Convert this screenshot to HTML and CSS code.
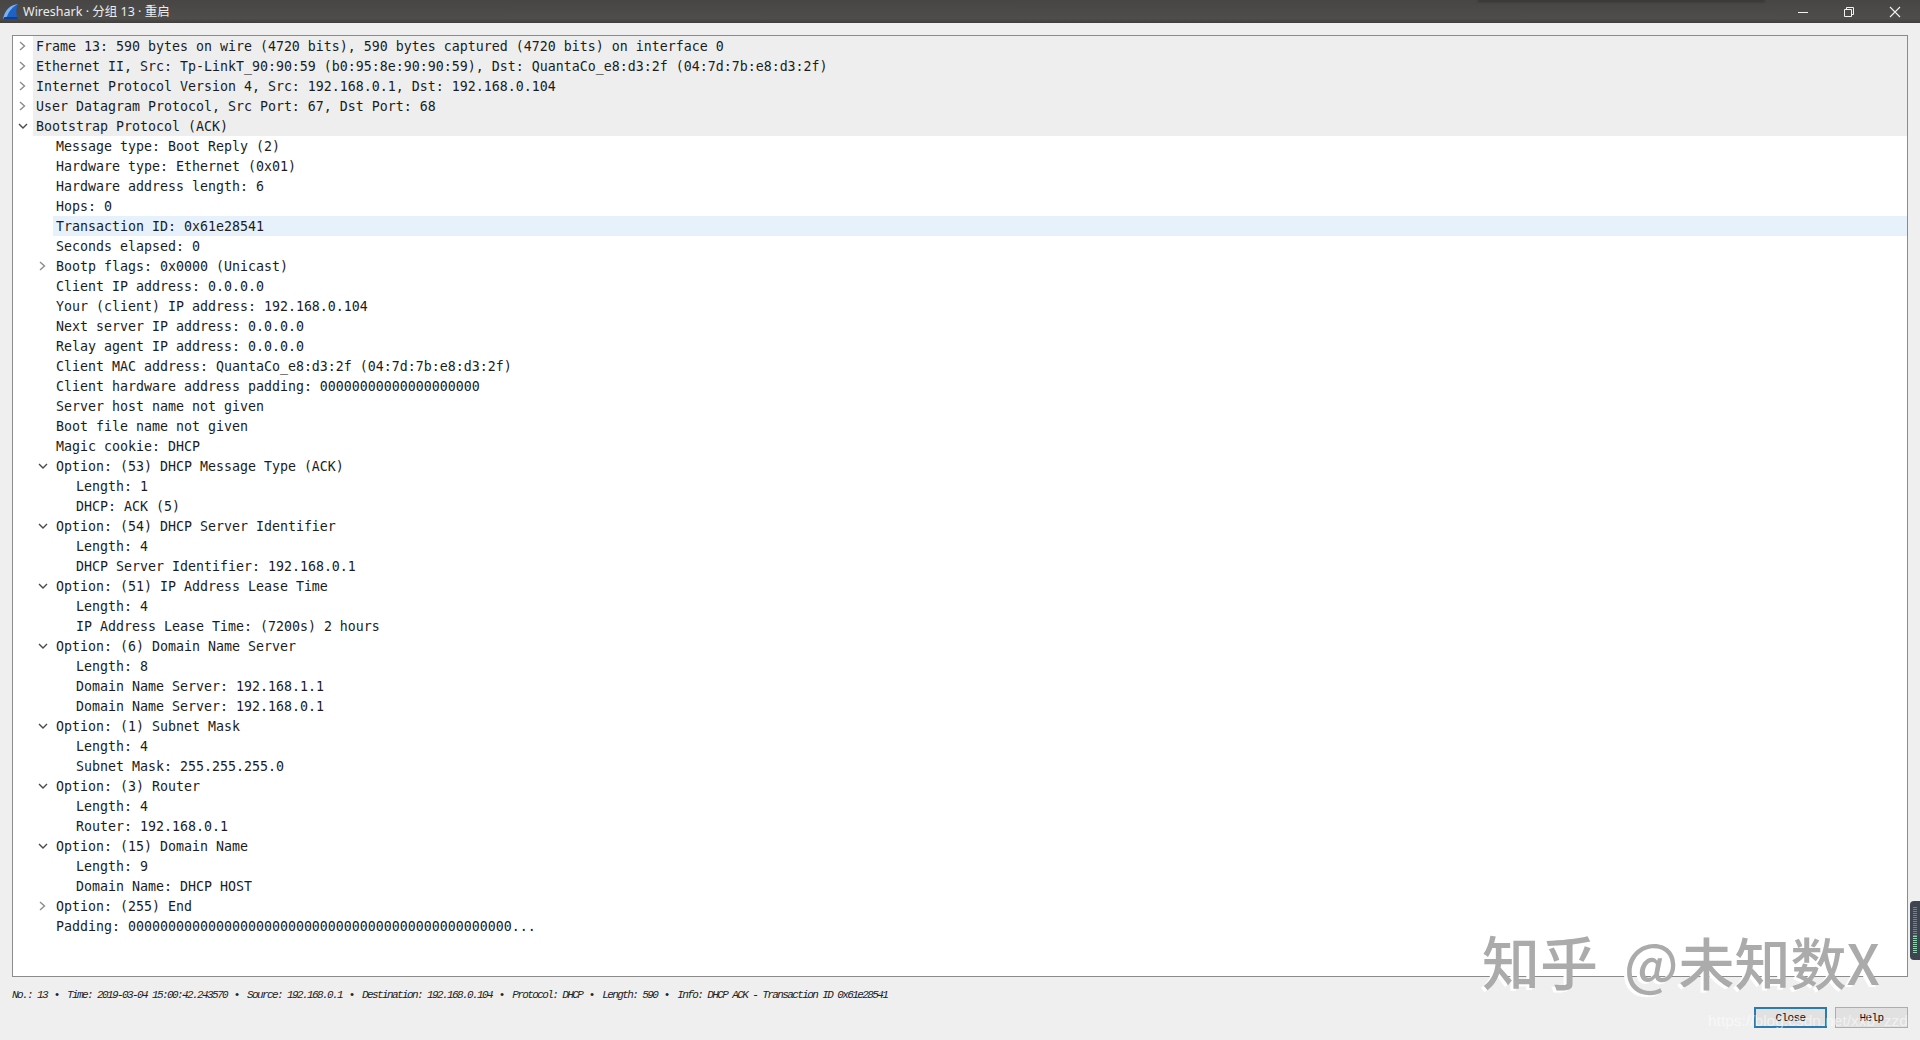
FILE: index.html
```html
<!DOCTYPE html>
<html lang="zh-CN">
<head>
<meta charset="utf-8">
<title>Wireshark · 分组 13 · 重启</title>
<link rel="stylesheet" href="styles.css">
</head>
<body>
<svg class="defs" width="0" height="0" aria-hidden="true">
  <symbol id="closed" viewBox="0 0 20 20"><path d="M7 6l4.500 4-4.500 4" fill="none" stroke="#8c8c8c" stroke-width="1.400"/></symbol>
  <symbol id="open" viewBox="0 0 20 20"><path d="M6 8l4 4 4-4" fill="none" stroke="#4a4a4a" stroke-width="1.400"/></symbol>
</svg>
<div class="window">
  <header class="titlebar">
    <svg class="app-icon" width="17" height="19" viewBox="0 0 17 19">
      <path d="M1 17.500C2 10 7 3 16 2c-2.500 5-2 11 0 15.500z" fill="#1f62c4"/>
      <path d="M1 17.500C2 10 7 3 16 2 11 4.500 7 9 5 14.500z" fill="#7fb2ea"/>
      <path d="M1 17.500h15l-.7-2.500H2.500z" fill="#113f96"/>
    </svg>
    <span class="title">Wireshark · 分组 13 · 重启</span>
    <div class="controls">
      <button class="ctl"><svg width="12" height="12" viewBox="0 0 12 12"><path d="M1 6.500h10" stroke="#f2f2f2" stroke-width="1"/></svg></button>
      <button class="ctl"><svg width="12" height="12" viewBox="0 0 12 12"><path d="M1.500 3.500h7v7h-7zM3.500 3.500v-2h7v7h-2" fill="none" stroke="#f2f2f2" stroke-width="1"/></svg></button>
      <button class="ctl"><svg width="12" height="12" viewBox="0 0 12 12"><path d="M1 1l10 10M11 1L1 11" stroke="#f2f2f2" stroke-width="1.100"/></svg></button>
    </div>
  </header>

  <main class="tree">
    <div class="row top"><svg class="arrow"><use href="#closed"/></svg><span class="label">Frame 13: 590 bytes on wire (4720 bits), 590 bytes captured (4720 bits) on interface 0</span></div>
    <div class="row top"><svg class="arrow"><use href="#closed"/></svg><span class="label">Ethernet II, Src: Tp-LinkT_90:90:59 (b0:95:8e:90:90:59), Dst: QuantaCo_e8:d3:2f (04:7d:7b:e8:d3:2f)</span></div>
    <div class="row top"><svg class="arrow"><use href="#closed"/></svg><span class="label">Internet Protocol Version 4, Src: 192.168.0.1, Dst: 192.168.0.104</span></div>
    <div class="row top"><svg class="arrow"><use href="#closed"/></svg><span class="label">User Datagram Protocol, Src Port: 67, Dst Port: 68</span></div>
    <div class="row top"><svg class="arrow"><use href="#open"/></svg><span class="label">Bootstrap Protocol (ACK)</span></div>
    <div class="row d1"><span class="arrow"></span><span class="label">Message type: Boot Reply (2)</span></div>
    <div class="row d1"><span class="arrow"></span><span class="label">Hardware type: Ethernet (0x01)</span></div>
    <div class="row d1"><span class="arrow"></span><span class="label">Hardware address length: 6</span></div>
    <div class="row d1"><span class="arrow"></span><span class="label">Hops: 0</span></div>
    <div class="row d1 selected"><span class="arrow"></span><span class="label">Transaction ID: 0x61e28541</span></div>
    <div class="row d1"><span class="arrow"></span><span class="label">Seconds elapsed: 0</span></div>
    <div class="row d1"><svg class="arrow"><use href="#closed"/></svg><span class="label">Bootp flags: 0x0000 (Unicast)</span></div>
    <div class="row d1"><span class="arrow"></span><span class="label">Client IP address: 0.0.0.0</span></div>
    <div class="row d1"><span class="arrow"></span><span class="label">Your (client) IP address: 192.168.0.104</span></div>
    <div class="row d1"><span class="arrow"></span><span class="label">Next server IP address: 0.0.0.0</span></div>
    <div class="row d1"><span class="arrow"></span><span class="label">Relay agent IP address: 0.0.0.0</span></div>
    <div class="row d1"><span class="arrow"></span><span class="label">Client MAC address: QuantaCo_e8:d3:2f (04:7d:7b:e8:d3:2f)</span></div>
    <div class="row d1"><span class="arrow"></span><span class="label">Client hardware address padding: 00000000000000000000</span></div>
    <div class="row d1"><span class="arrow"></span><span class="label">Server host name not given</span></div>
    <div class="row d1"><span class="arrow"></span><span class="label">Boot file name not given</span></div>
    <div class="row d1"><span class="arrow"></span><span class="label">Magic cookie: DHCP</span></div>
    <div class="row d1"><svg class="arrow"><use href="#open"/></svg><span class="label">Option: (53) DHCP Message Type (ACK)</span></div>
    <div class="row d2"><span class="arrow"></span><span class="label">Length: 1</span></div>
    <div class="row d2"><span class="arrow"></span><span class="label">DHCP: ACK (5)</span></div>
    <div class="row d1"><svg class="arrow"><use href="#open"/></svg><span class="label">Option: (54) DHCP Server Identifier</span></div>
    <div class="row d2"><span class="arrow"></span><span class="label">Length: 4</span></div>
    <div class="row d2"><span class="arrow"></span><span class="label">DHCP Server Identifier: 192.168.0.1</span></div>
    <div class="row d1"><svg class="arrow"><use href="#open"/></svg><span class="label">Option: (51) IP Address Lease Time</span></div>
    <div class="row d2"><span class="arrow"></span><span class="label">Length: 4</span></div>
    <div class="row d2"><span class="arrow"></span><span class="label">IP Address Lease Time: (7200s) 2 hours</span></div>
    <div class="row d1"><svg class="arrow"><use href="#open"/></svg><span class="label">Option: (6) Domain Name Server</span></div>
    <div class="row d2"><span class="arrow"></span><span class="label">Length: 8</span></div>
    <div class="row d2"><span class="arrow"></span><span class="label">Domain Name Server: 192.168.1.1</span></div>
    <div class="row d2"><span class="arrow"></span><span class="label">Domain Name Server: 192.168.0.1</span></div>
    <div class="row d1"><svg class="arrow"><use href="#open"/></svg><span class="label">Option: (1) Subnet Mask</span></div>
    <div class="row d2"><span class="arrow"></span><span class="label">Length: 4</span></div>
    <div class="row d2"><span class="arrow"></span><span class="label">Subnet Mask: 255.255.255.0</span></div>
    <div class="row d1"><svg class="arrow"><use href="#open"/></svg><span class="label">Option: (3) Router</span></div>
    <div class="row d2"><span class="arrow"></span><span class="label">Length: 4</span></div>
    <div class="row d2"><span class="arrow"></span><span class="label">Router: 192.168.0.1</span></div>
    <div class="row d1"><svg class="arrow"><use href="#open"/></svg><span class="label">Option: (15) Domain Name</span></div>
    <div class="row d2"><span class="arrow"></span><span class="label">Length: 9</span></div>
    <div class="row d2"><span class="arrow"></span><span class="label">Domain Name: DHCP HOST</span></div>
    <div class="row d1"><svg class="arrow"><use href="#closed"/></svg><span class="label">Option: (255) End</span></div>
    <div class="row d1"><span class="arrow"></span><span class="label">Padding: 000000000000000000000000000000000000000000000000...</span></div>
  </main>

  <footer class="bottom">
    <p class="summary">No.: 13 <i class="dot">•</i> Time: 2019-03-04 15:00:42.243570 <i class="dot">•</i> Source: 192.168.0.1 <i class="dot">•</i> Destination: 192.168.0.104 <i class="dot">•</i> Protocol: DHCP <i class="dot">•</i> Length: 590 <i class="dot">•</i> Info: DHCP ACK - Transaction ID 0x61e28541</p>
    <div class="buttons">
      <button class="btn primary">Close</button>
      <button class="btn">Help</button>
    </div>
  </footer>
</div>

<div class="mark-zhihu"><span>知乎</span><span class="handle">@未知数X</span></div>
<div class="mark-csdn">https://blog.csdn.net/xxb_zzd</div>
<div class="widget"><span class="ticks"></span></div>
</body>
</html>
```
FILE: styles.css
```css
* { box-sizing: border-box; }
html, body { margin: 0; height: 100%; overflow: hidden; }
body { background: #efefef; font-family: "DejaVu Sans Mono", monospace; position: relative; }
.defs { position: absolute; }

.window { display: flex; flex-direction: column; height: 1040px; }

.titlebar {
  flex: 0 0 23px;
  display: flex;
  align-items: center;
  padding: 0 2px;
  background: linear-gradient(#474644, #4e4d4b 80%, #403f3e);
  color: #ececec;
  position: relative;
}
.titlebar::before {
  content: "";
  position: absolute;
  left: 1478px;
  top: 0;
  width: 287px;
  height: 2px;
  background: #333230;
  filter: blur(1px);
}
.app-icon { flex: none; }
.title {
  margin-left: 4px;
  font: 12.500px "Noto Sans", "Noto Sans CJK SC", sans-serif;
  line-height: 22px;
}
.controls { margin-left: auto; display: flex; }
.ctl {
  width: 46px;
  height: 21px;
  padding: 0;
  border: 0;
  background: none;
  display: flex;
  align-items: center;
  justify-content: center;
}

.tree {
  flex: 0 0 942px;
  margin: 12px 12px 0;
  border: 1px solid #8b8b8b;
  background: #fff;
  font-size: 13.290px;
  color: #1c1c1c;
}
.row { display: flex; height: 20px; line-height: 20px; }
.arrow { flex: none; width: 20px; height: 20px; display: block; }
.label { flex: 1; padding: 1px 0 0 3px; white-space: pre; }
.top .label { background: #eeeeee; }
.d1 { padding-left: 20px; }
.d2 { padding-left: 40px; }
.selected .label { background: #e6f1fb; }

.bottom { flex: 1; display: flex; flex-direction: column; padding: 0 12px 12px; }
.summary {
  margin: 12px 0 0 0;
  font: italic 11px/12px "Liberation Mono", monospace;
  letter-spacing: -1.600px;
  color: #222;
  white-space: pre;
}
.dot { display: inline-block; width: 10px; text-align: center; font-style: normal; letter-spacing: 0; }
.buttons { margin-top: auto; display: flex; justify-content: flex-end; gap: 8px; }
.btn {
  width: 73px;
  height: 21px;
  padding: 0;
  background: #e1e1e1;
  border: 1px solid #adadad;
  font: 11px "Liberation Mono", monospace;
  letter-spacing: -.600px;
  color: #111;
}
.primary { border: 2px solid #2b7bb0; }

.mark-zhihu {
  position: absolute;
  left: 1482px;
  top: 922px;
  display: flex;
  gap: 26px;
  align-items: baseline;
  font: 500 58px/76px "Noto Sans CJK SC", sans-serif;
  color: #ababab;
  text-shadow: -3px 2px 0 #fff;
  white-space: pre;
  pointer-events: none;
}
.handle { font-size: 56px; }
.mark-csdn {
  position: absolute;
  left: 1708px;
  top: 1010px;
  font: 15.500px/22px "Liberation Sans", sans-serif;
  color: rgba(255, 255, 255, .55);
  white-space: pre;
  pointer-events: none;
}
.widget {
  position: absolute;
  left: 1910px;
  top: 901px;
  width: 10px;
  height: 59px;
  background: #3e4450;
  border-radius: 4px 0 0 4px;
  display: flex;
  justify-content: center;
  padding: 6px 0;
}
.ticks {
  width: 4px;
  background: repeating-linear-gradient(#7a818c 0 1px, transparent 1px 2px);
  position: relative;
}
.ticks::after {
  content: "";
  position: absolute;
  left: 0;
  right: 0;
  bottom: 0;
  height: 18px;
  background: repeating-linear-gradient(#8fd6b0 0 1px, #3e4450 1px 2px);
}
```
